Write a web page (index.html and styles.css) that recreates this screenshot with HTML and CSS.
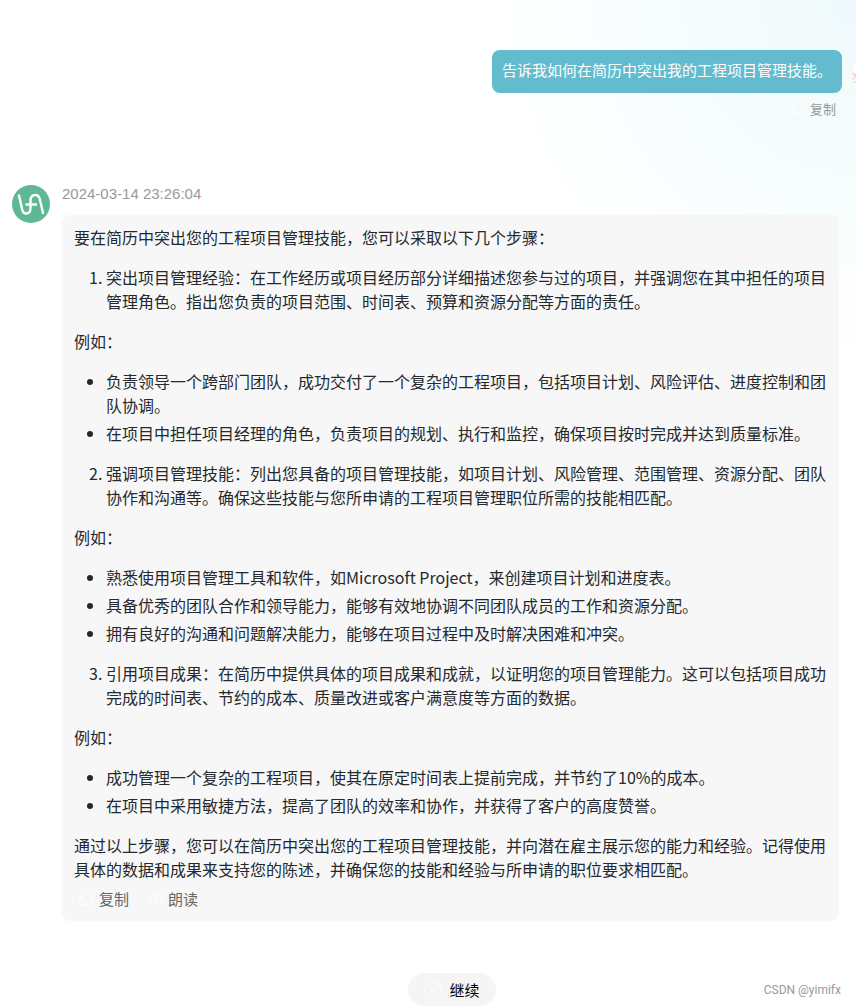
FILE: index.html
```html
<!DOCTYPE html>
<html lang="zh-CN">
<head>
  <meta charset="utf-8">
  <meta name="viewport" content="width=device-width, initial-scale=1">
  <title>Chat</title>
  <link rel="stylesheet" href="styles.css">
</head>
<body>
  <main class="chat">
    <section class="message user">
      <div class="user-body">
        <div class="bubble">告诉我如何在简历中突出我的工程项目管理技能。</div>
        <button type="button" class="action small">
          <svg class="icon" viewBox="0 0 14 14" aria-hidden="true">
            <rect x="3.5" y="1" width="9.5" height="9.5" rx="1.5"/>
            <path d="M1 4v7.5A1.5 1.5 0 0 0 2.5 13H10"/>
          </svg>
          复制
        </button>
      </div>
      <svg class="user-avatar" viewBox="0 0 38 38" aria-hidden="true">
        <circle cx="19" cy="19" r="19" fill="#fff"/>
        <path d="M0 18l4 2M1 21h4M0 24l5-1M2 27l4-1" fill="none" stroke="#f6d5d8" stroke-width="1.5"/>
      </svg>
    </section>

    <section class="message bot">
      <svg class="avatar" viewBox="0 0 38 38" aria-hidden="true">
        <circle cx="19" cy="19" r="19" fill="#5fb894"/>
        <path d="M7 10.5L10.2 24.5C10.9 27.500 12 28.500 14 28.500C17.500 28.500 18.500 26.500 18.500 23V15.500C18.500 12 20 10 23.300 10C26 10 27.200 11.500 27.900 14.500L31 28M14.500 19.500H24" fill="none" stroke="#fff" stroke-width="2.400" stroke-linecap="round"/>
      </svg>
      <div class="bot-body">
        <time class="time" datetime="2024-03-14T23:26:04">2024-03-14 23:26:04</time>
        <div class="answer">
          <p>要在简历中突出您的工程项目管理技能，您可以采取以下几个步骤：</p>
          <ol>
            <li>突出项目管理经验：在工作经历或项目经历部分详细描述您参与过的项目，并强调您在其中担任的项目管理角色。指出您负责的项目范围、时间表、预算和资源分配等方面的责任。</li>
          </ol>
          <p>例如：</p>
          <ul>
            <li>负责领导一个跨部门团队，成功交付了一个复杂的工程项目，包括项目计划、风险评估、进度控制和团队协调。</li>
            <li>在项目中担任项目经理的角色，负责项目的规划、执行和监控，确保项目按时完成并达到质量标准。</li>
          </ul>
          <ol start="2">
            <li>强调项目管理技能：列出您具备的项目管理技能，如项目计划、风险管理、范围管理、资源分配、团队协作和沟通等。确保这些技能与您所申请的工程项目管理职位所需的技能相匹配。</li>
          </ol>
          <p>例如：</p>
          <ul>
            <li>熟悉使用项目管理工具和软件，如Microsoft Project，来创建项目计划和进度表。</li>
            <li>具备优秀的团队合作和领导能力，能够有效地协调不同团队成员的工作和资源分配。</li>
            <li>拥有良好的沟通和问题解决能力，能够在项目过程中及时解决困难和冲突。</li>
          </ul>
          <ol start="3">
            <li>引用项目成果：在简历中提供具体的项目成果和成就，以证明您的项目管理能力。这可以包括项目成功完成的时间表、节约的成本、质量改进或客户满意度等方面的数据。</li>
          </ol>
          <p>例如：</p>
          <ul>
            <li>成功管理一个复杂的工程项目，使其在原定时间表上提前完成，并节约了10%的成本。</li>
            <li>在项目中采用敏捷方法，提高了团队的效率和协作，并获得了客户的高度赞誉。</li>
          </ul>
          <p>通过以上步骤，您可以在简历中突出您的工程项目管理技能，并向潜在雇主展示您的能力和经验。记得使用具体的数据和成果来支持您的陈述，并确保您的技能和经验与所申请的职位要求相匹配。</p>
          <div class="actions">
            <button type="button" class="action">
              <svg class="icon" viewBox="0 0 14 14" aria-hidden="true">
                <rect x="3.5" y="1" width="9.5" height="9.5" rx="1.5"/>
                <path d="M1 4v7.5A1.5 1.5 0 0 0 2.5 13H10"/>
              </svg>
              复制
            </button>
            <button type="button" class="action">
              <svg class="icon" viewBox="0 0 14 14" aria-hidden="true">
                <path d="M1 4.500h2.500L7.500 2v10L3.500 9.500H1zM9.500 5a3 3 0 0 1 0 4M11.500 2.500a6 6 0 0 1 0 9"/>
              </svg>
              朗读
            </button>
          </div>
        </div>
      </div>
    </section>
  </main>

  <footer class="footer">
    <button type="button" class="continue">
      <svg class="play" viewBox="0 0 18 18" aria-hidden="true">
        <circle cx="9" cy="9" r="8"/>
        <path d="M7 6v6l5-3z"/>
      </svg>
      继续
    </button>
    <span class="watermark">CSDN @yimifx</span>
  </footer>
</body>
</html>
```
FILE: styles.css
```css
* {
  box-sizing: border-box;
}

body {
  margin: 0;
  color: #24292f;
  font-family: "Noto Sans CJK SC", sans-serif;
  font-size: 16px;
  line-height: 24px;
  background: #fff radial-gradient(circle at 100% 0, #eff9fb 0, #f8fdfe 200px, #fff 380px) no-repeat;
  overflow-x: hidden;
}

button {
  display: inline-flex;
  align-items: center;
  border: none;
  padding: 0;
  background: none;
  font-family: inherit;
  cursor: pointer;
}

.chat {
  padding-top: 50px;
}

.message {
  display: flex;
}

.user {
  justify-content: flex-end;
  gap: 10px;
  margin-right: -34px;
}

.user-body {
  display: flex;
  flex-direction: column;
  align-items: flex-end;
  gap: 6px;
}

.bubble {
  padding: 8px 10px 11px;
  border-radius: 8px;
  background: #63bbce;
  color: #fff;
  font-size: 15px;
}

.user-avatar {
  flex: none;
  width: 38px;
  height: 38px;
  margin-top: 5px;
}

.bot {
  gap: 12px;
  margin-top: 64px;
  padding: 0 17px 0 12px;
}

.avatar {
  flex: none;
  width: 38px;
  height: 38px;
  margin-top: 2px;
}

.bot-body {
  flex: 1;
  min-width: 0;
}

.time {
  display: block;
  height: 32px;
  color: #999;
  font-family: "Liberation Sans", Arial, sans-serif;
  font-size: 15px;
  line-height: 22px;
}

.answer {
  padding: 10px 12px 12px;
  border-radius: 8px;
  background: #f7f7f7;
}

.answer p,
.answer ol,
.answer ul {
  margin: 0 0 16px;
}

.answer ol,
.answer ul {
  padding-left: 32px;
}

.answer li + li {
  margin-top: 4px;
}

.answer p:last-of-type {
  margin-bottom: 8px;
}

.actions {
  display: flex;
  gap: 19px;
  padding-left: 5px;
}

.action {
  gap: 6px;
  color: #666;
  font-size: 15px;
  line-height: 20px;
}

.action.small {
  gap: 4px;
  margin-right: 6px;
  color: #999;
  font-size: 13px;
}

.icon {
  width: 14px;
  height: 14px;
  fill: none;
  stroke: #fff;
}

.footer {
  position: relative;
  display: flex;
  justify-content: center;
  margin-top: 52px;
  padding-left: 48px;
}

.continue {
  gap: 7px;
  height: 33px;
  padding: 0 16px;
  border-radius: 17px;
  background: #f5f5f5;
  color: #000;
  font-size: 15px;
}

.play {
  width: 18px;
  height: 18px;
  fill: none;
  stroke: #fff;
}

.watermark {
  position: absolute;
  right: 15px;
  top: 8px;
  color: #999;
  font-family: Roboto, sans-serif;
  font-size: 12px;
  line-height: 18px;
}
```
